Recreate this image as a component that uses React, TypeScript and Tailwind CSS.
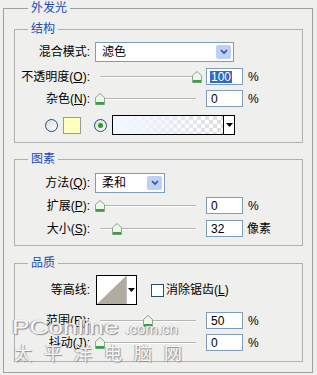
import React from 'react';

const Thumb = () => (
  <svg width="10" height="12" viewBox="0 0 10 12">
    <path d="M0.5 4.5 L5 0.5 L9.5 4.5 L9.5 11.5 L0.5 11.5 Z" fill="#eef6ec" stroke="#8aa88a" />
    <rect x="1" y="9" width="8" height="2.5" fill="#3f9e45" />
  </svg>
);

const Slider = ({ pos }: { pos: number }) => (
  <div className="relative ml-[5px] h-[17px] w-[106px]">
    <div className="absolute left-[5px] top-[8px] h-[2px] w-[96px] border-t border-[#b4b4b4] bg-white" />
    <div className="absolute top-[3px]" style={{ left: pos }}>
      <Thumb />
    </div>
  </div>
);

const Key = ({ k }: { k: string }) => (
  <>
    (<span className="underline">{k}</span>):
  </>
);

const Label = ({ children }: { children: React.ReactNode }) => (
  <div className="w-[75px] shrink-0 text-right leading-none">{children}</div>
);

const NumBox = ({ value, selected }: { value: string; selected?: boolean }) => (
  <div className="ml-[5px] flex h-[17px] w-[37px] items-center border border-[#7f9db9] bg-white pl-[3px] text-[12px] leading-none">
    {selected ? <span className="bg-[#316ac5] px-[1px] text-white">{value}</span> : <span className="px-[1px]">{value}</span>}
  </div>
);

const Chevron = () => (
  <div className="m-[2px] ml-auto flex h-[14px] w-[15px] items-center justify-center rounded-[2px] bg-[#bcd0f8]">
    <svg width="8" height="6" viewBox="0 0 8 6">
      <path d="M1 1 L4 4 L7 1" fill="none" stroke="#34508f" strokeWidth="1.6" />
    </svg>
  </div>
);

const Select = ({ text, width }: { text: string; width: string }) => (
  <div className={`ml-[5px] flex h-[20px] items-center border border-[#7f9db9] bg-white ${width}`}>
    <span className="pl-[6px] leading-none">{text}</span>
    <Chevron />
  </div>
);

const Radio = ({ checked }: { checked?: boolean }) => (
  <div className="flex h-[13px] w-[13px] items-center justify-center rounded-full border border-[#1c5180] bg-gradient-to-br from-[#dcdcd6] to-white">
    {checked && <div className="h-[5px] w-[5px] rounded-full bg-[#21a121]" />}
  </div>
);

const SmallArrow = () => (
  <svg width="7" height="4" viewBox="0 0 7 4">
    <path d="M0 0 L7 0 L3.5 4 Z" fill="#000" />
  </svg>
);

const Group = ({ title, children, className }: { title: string; children: React.ReactNode; className?: string }) => (
  <fieldset className={`border border-[#b0b0b0] ${className ?? ''}`}>
    <legend className="ml-[13px] px-[3px] text-[12px] leading-[14px] text-[#1c4bb8]">{title}</legend>
    {children}
  </fieldset>
);

const App = () => {
  return (
    <div className="relative h-[375px] w-[317px] overflow-hidden bg-[#efefed] pt-[1px] font-['Liberation_Sans','Noto_Sans_CJK_SC',sans-serif] text-[12px] text-black">
      <fieldset className="ml-[3px] h-[372px] w-[310px] border border-[#a0a0a0] pl-[10px] pr-[9px] pt-[7px]">
        <legend className="ml-[14px] px-[3px] text-[12px] leading-[14px] text-[#1c4bb8]">外发光</legend>

        <Group title="结构" className="pb-[7px]">
          <div className="mt-[6px] flex h-[20px] items-center">
            <Label>混合模式:</Label>
            <Select text="滤色" width="w-[139px]" />
          </div>
          <div className="mt-[6px] flex h-[17px] items-center">
            <Label>不透明度<Key k="O" /></Label>
            <Slider pos={97} />
            <NumBox value="100" selected />
            <span className="ml-[5px]">%</span>
          </div>
          <div className="mt-[5px] flex h-[17px] items-center">
            <Label>杂色<Key k="N" /></Label>
            <Slider pos={0} />
            <NumBox value="0" />
            <span className="ml-[5px]">%</span>
          </div>
          <div className="mt-[8px] flex h-[20px] items-center">
            <div className="ml-[30px]"><Radio /></div>
            <div className="ml-[5px] h-[17px] w-[18px] border border-[#9a9a9a] bg-[#ffffc0]" />
            <div className="ml-[13px]"><Radio checked /></div>
            <div className="ml-[5px] flex h-[20px] w-[123px] border border-black bg-[conic-gradient(#dedede_25%,#fff_0_50%,#dedede_0_75%,#fff_0)] bg-[length:8px_8px]">
              <div className="h-full flex-1 bg-gradient-to-r from-[#f4f8ff] via-[#eef4fc]/70 to-transparent" />
              <div className="flex w-[11px] items-center justify-center border-l border-black bg-white">
                <SmallArrow />
              </div>
            </div>
          </div>
        </Group>

        <Group title="图素" className="mt-[9px] pb-[8px]">
          <div className="mt-[7px] flex h-[20px] items-center">
            <Label>方法<Key k="Q" /></Label>
            <Select text="柔和" width="w-[70px]" />
          </div>
          <div className="mt-[4px] flex h-[17px] items-center">
            <Label>扩展<Key k="P" /></Label>
            <Slider pos={0} />
            <NumBox value="0" />
            <span className="ml-[5px]">%</span>
          </div>
          <div className="mt-[6px] flex h-[17px] items-center">
            <Label>大小<Key k="S" /></Label>
            <Slider pos={17} />
            <NumBox value="32" />
            <span className="ml-[4px]">像素</span>
          </div>
        </Group>

        <Group title="品质" className="mt-[10px] pb-[10px]">
          <div className="mt-[5px] flex h-[30px] items-center">
            <Label>等高线:</Label>
            <div className="ml-[6px] flex h-[30px] w-[41px] border border-black bg-white">
              <svg width="29" height="28" viewBox="0 0 29 28">
                <path d="M29 0 L29 28 L0 28 Z" fill="#b1aba0" />
              </svg>
              <div className="flex flex-1 items-center justify-center border-l border-[#c0c0c0] bg-white">
                <SmallArrow />
              </div>
            </div>
            <div className="ml-[14px] h-[13px] w-[13px] border border-[#1c5180] bg-white" />
            <span className="ml-[2px] leading-none">消除锯齿(<span className="underline">L</span>)</span>
          </div>
          <div className="mt-[7px] flex h-[17px] items-center">
            <Label>范围<Key k="R" /></Label>
            <Slider pos={48} />
            <NumBox value="50" />
            <span className="ml-[5px]">%</span>
          </div>
          <div className="mt-[5px] flex h-[17px] items-center">
            <Label>抖动<Key k="J" /></Label>
            <Slider pos={0} />
            <NumBox value="0" />
            <span className="ml-[5px]">%</span>
          </div>
        </Group>
      </fieldset>

      {/* watermark */}
      <div className="pointer-events-none absolute left-[12px] top-[316px] text-white/90 [text-shadow:1px_1px_1px_#8a8a8a,-1px_0_1px_#a8a8a8]">
        <div className="flex items-baseline leading-none">
          <span className="origin-left scale-x-125 text-[21px] font-['Liberation_Sans',sans-serif]">PConline</span>
          <span className="ml-[28px] text-[15px] font-['Liberation_Sans',sans-serif]">.com.cn</span>
        </div>
        <div className="mt-[6px] pl-[2px] text-[18px] leading-none tracking-[12px] font-['Noto_Sans_CJK_SC',sans-serif]">太平洋电脑网</div>
      </div>
    </div>
  );
};

export default App;
